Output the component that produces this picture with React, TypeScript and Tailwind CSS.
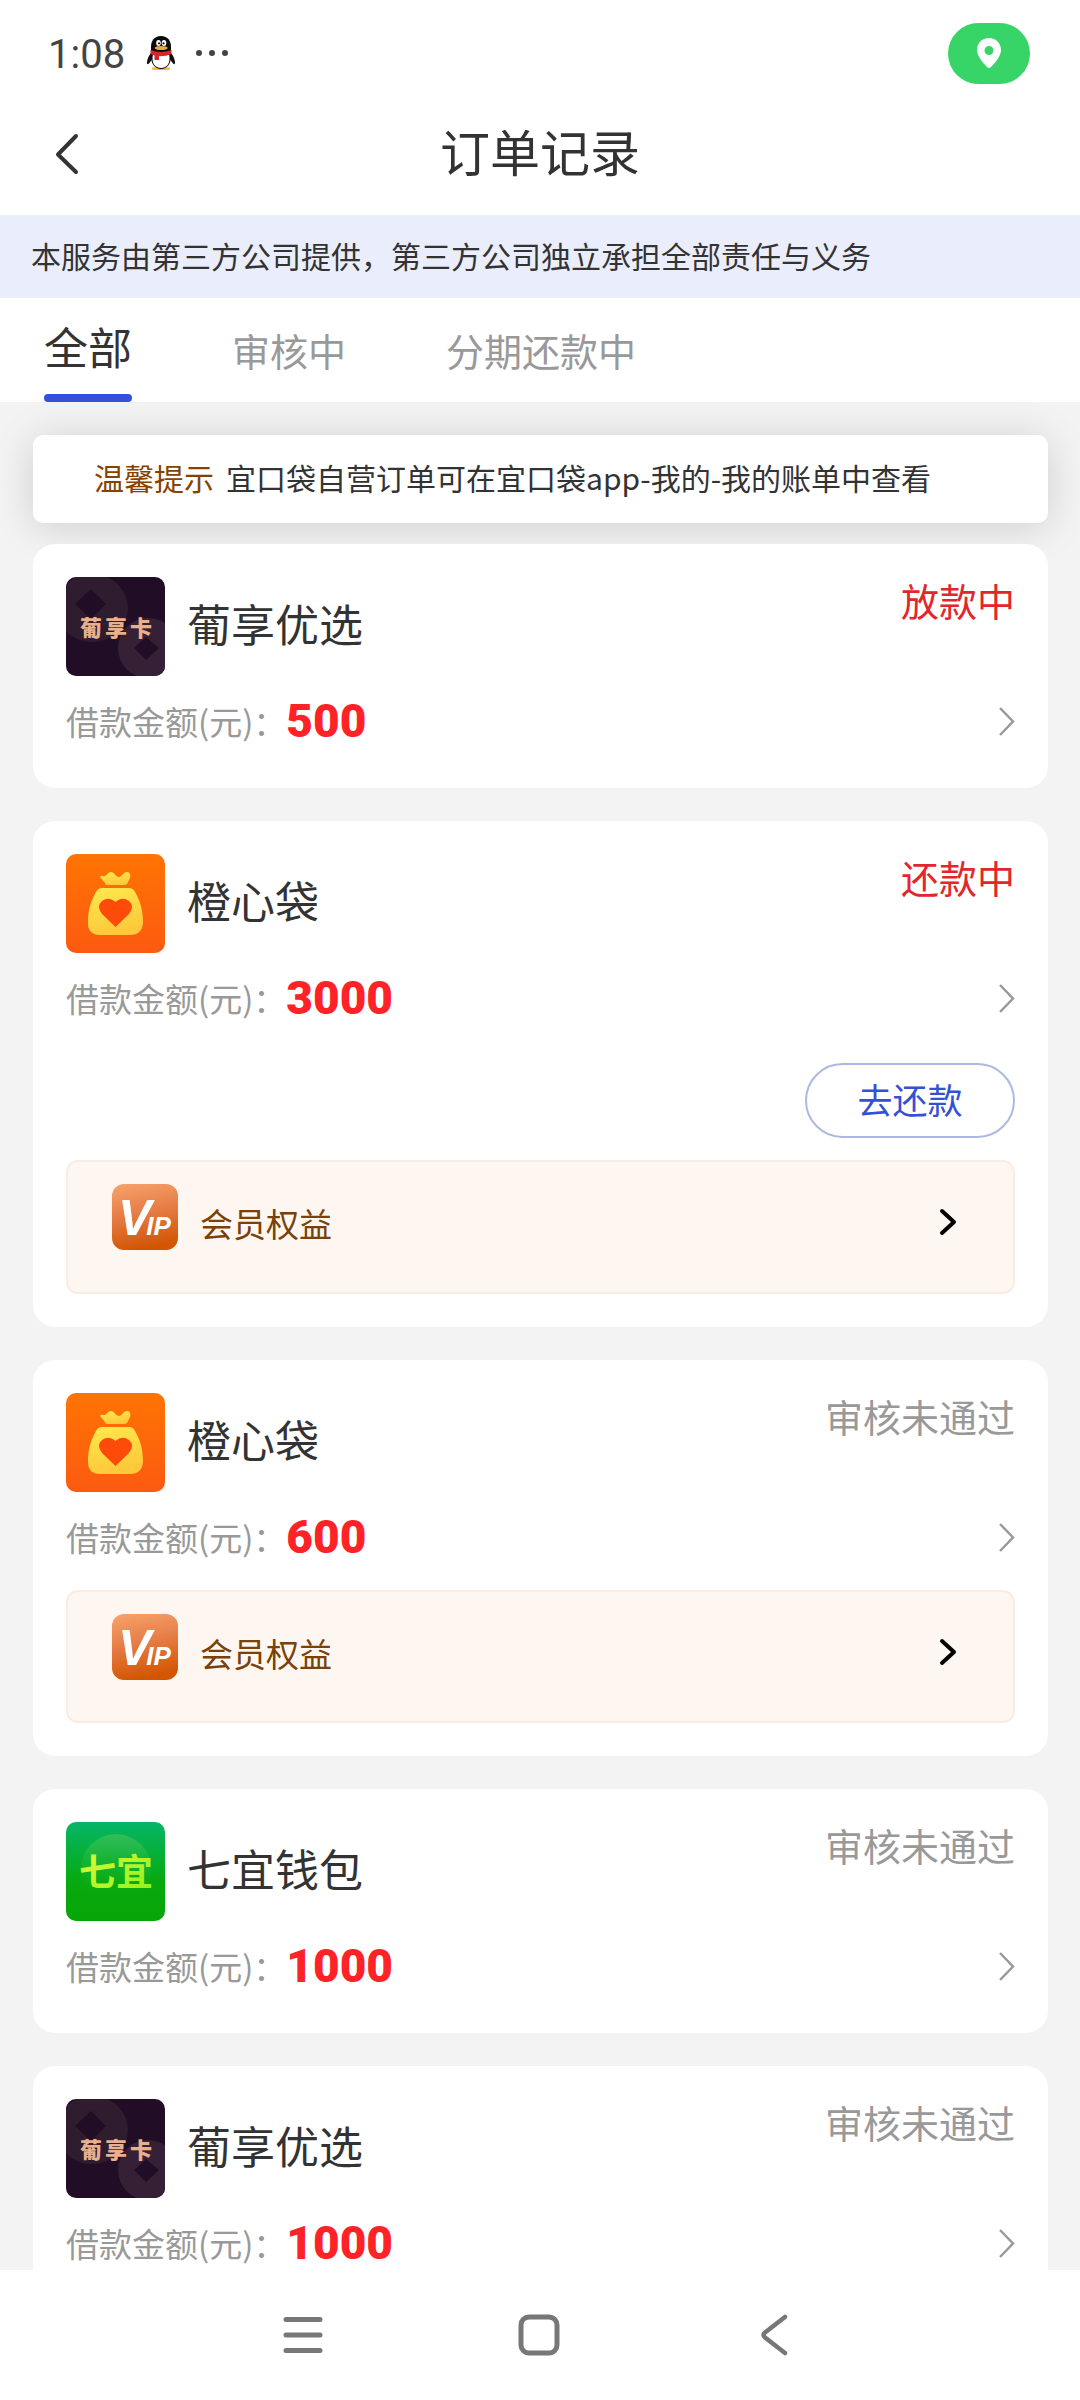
import React, { useState } from 'react'

type Brand = 'puxiang' | 'chengxin' | 'qiyi'

interface Order {
  id: number
  brand: Brand
  name: string
  amount: number
  status: string
  active?: boolean
  repay?: boolean
  vip?: boolean
}

const TABS = ['全部', '审核中', '分期还款中']

const ORDERS: Order[] = [
  { id: 1, brand: 'puxiang', name: '葡享优选', amount: 500, status: '放款中', active: true },
  { id: 2, brand: 'chengxin', name: '橙心袋', amount: 3000, status: '还款中', active: true, repay: true, vip: true },
  { id: 3, brand: 'chengxin', name: '橙心袋', amount: 600, status: '审核未通过', vip: true },
  { id: 4, brand: 'qiyi', name: '七宜钱包', amount: 1000, status: '审核未通过' },
  { id: 5, brand: 'puxiang', name: '葡享优选', amount: 1000, status: '审核未通过' },
]

const PenguinIcon = () => (
  <svg width="28" height="34" viewBox="0 0 28 34" aria-hidden="true">
    <path d="M5 31.500h18v1.500q0 1-2 1H7q-2 0-2-1z" fill="#f5b941" />
    <path d="M4 17Q0 22 0 27q0 2 2 .5l3-4zM24 17q4 5 4 10 0 2-2 .5l-3-4z" fill="#111" />
    <path d="M14 0C7 0 4 5 4 11v9c0 8 4 13 10 13s10-5 10-13v-9C24 5 21 0 14 0z" fill="#0b0b0b" />
    <path d="M6 18c-2 9 2 14 8 14s10-5 8-14z" fill="#fff" />
    <ellipse cx="11.500" cy="7" rx="2.300" ry="3" fill="#fff" />
    <ellipse cx="17" cy="7" rx="2.300" ry="3" fill="#fff" />
    <circle cx="12" cy="7.300" r="1.100" fill="#111" />
    <circle cx="16.600" cy="7.300" r="1.100" fill="#111" />
    <ellipse cx="14.200" cy="12" rx="6.500" ry="2" fill="#f2a93b" />
    <path d="M3.500 14q10.500 4 21 0v4q-6 2.500-12.500 2.200V24H7.500v-4.500l-4-1.500z" fill="#d8242c" />
  </svg>
)

const PuxiangLogo = () => (
  <svg viewBox="0 0 99 99" className="size-[99px] shrink-0 rounded-[10px]" role="img" aria-label="葡享卡">
    <rect width="99" height="99" fill="#210e26" />
    <path fillRule="evenodd" d="M26-3a36 34 0 1 1 0 68 36 34 0 0 1 0-68zM25 12L9 27l16 15 15-15z" fill="#301c2f" />
    <path fillRule="evenodd" d="M82 41a30 30 0 1 1 0 60 30 30 0 0 1 0-60zM80 60L68 71l12 12 13-12z" fill="#362036" />
    <g fontSize="22" fontWeight="900" fill="#e8b08c" textAnchor="middle">
      <text x="25" y="59">葡</text>
      <text x="50" y="59">享</text>
      <text x="75" y="59">卡</text>
    </g>
  </svg>
)

const ChengxinLogo = () => (
  <svg viewBox="0 0 99 99" className="size-[99px] shrink-0 rounded-[10px]" role="img" aria-label="橙心袋">
    <defs>
      <linearGradient id="orange" x1="0" y1="0" x2="0" y2="1">
        <stop offset="0" stopColor="#ff7403" />
        <stop offset="1" stopColor="#fc5a10" />
      </linearGradient>
      <linearGradient id="bag" x1="0" y1="0" x2="0.300" y2="1">
        <stop offset="0" stopColor="#ffe94d" />
        <stop offset="1" stopColor="#fdc93a" />
      </linearGradient>
    </defs>
    <rect width="99" height="99" fill="url(#orange)" />
    <path d="M34 23c1-2 3-1 5-1 2-1 3-4 6-4s5 5 8 5 4-5 8-5c3 0 4 3 3 6l-3 6q-1 1-3 1H41q-2 0-2-2z" fill="url(#bag)" />
    <path d="M36 34h27q4 0 6 4c5 9 8 17 8 31q-1 12-13 12H34q-12 0-12-12c0-14 3-22 8-31q2-4 6-4z" fill="url(#bag)" />
    <path d="M49.500 73L36 60q-6-8 0-13 7-5 13.500 1Q56 42 63 47q6 5 0 13z" fill="#ff4b0a" />
  </svg>
)

const QiyiLogo = () => (
  <svg viewBox="0 0 99 99" className="size-[99px] shrink-0 rounded-[10px]" role="img" aria-label="七宜">
    <defs>
      <linearGradient id="green" x1="0" y1="0" x2="0" y2="1">
        <stop offset="0" stopColor="#05b668" />
        <stop offset="0.600" stopColor="#07aa0f" />
        <stop offset="1" stopColor="#08a507" />
      </linearGradient>
      <linearGradient id="disc" x1="0" y1="0" x2="0" y2="1">
        <stop offset="0" stopColor="#3fc05c" stopOpacity="0.800" />
        <stop offset="0.900" stopColor="#0fae14" stopOpacity="0" />
      </linearGradient>
      <linearGradient id="lime" x1="0" y1="0" x2="1" y2="1">
        <stop offset="0" stopColor="#e6fb3a" />
        <stop offset="1" stopColor="#8cf01c" />
      </linearGradient>
    </defs>
    <rect width="99" height="99" fill="url(#green)" />
    <circle cx="50" cy="47" r="35" fill="url(#disc)" />
    <text x="50" y="64" fontSize="37" fontWeight="700" textAnchor="middle" fill="url(#lime)">
      七宜
    </text>
  </svg>
)

const VipLogo = () => (
  <svg viewBox="0 0 66 66" className="size-[66px] rounded-xl" role="img" aria-label="VIP">
    <defs>
      <linearGradient id="vip" x1="0.200" y1="0" x2="0.400" y2="1">
        <stop offset="0" stopColor="#f6a06a" />
        <stop offset="0.500" stopColor="#e47a42" />
        <stop offset="1" stopColor="#d25500" />
      </linearGradient>
    </defs>
    <rect width="66" height="66" fill="url(#vip)" />
    <text
      x="6"
      y="51"
      fontSize="50"
      fontFamily="Liberation Sans, sans-serif"
      fontWeight="700"
      fontStyle="italic"
      fill="#fff"
    >
      V<tspan dx="-5" fontSize="26">IP</tspan>
    </text>
  </svg>
)

const LOGOS: Record<Brand, React.FC> = {
  puxiang: PuxiangLogo,
  chengxin: ChengxinLogo,
  qiyi: QiyiLogo,
}

const OrderCard: React.FC<{ order: Order }> = ({ order }) => {
  const Logo = LOGOS[order.brand]

  return (
    <article className="rounded-[22px] bg-white p-[33px]">
      <div className="flex items-start">
        <Logo />
        <h2 className="ml-[22px] flex-1 text-[44px] leading-[92px] text-[#333]">{order.name}</h2>
        <span className={order.active ? 'text-[38px] leading-[46px] text-[#e3262b]' : 'text-[38px] leading-[46px] text-[#999]'}>
          {order.status}
        </span>
      </div>

      <a href="#" className="mt-[11px] flex h-[68px] items-center">
        <span className="text-[33px] leading-[44px] text-[#999]">借款金额(元)：</span>
        <span className="font-[Roboto,sans-serif] text-[46px] leading-[46px] font-black text-[#ff2226]">
          {order.amount}
        </span>
        <svg className="ml-auto" width="17" height="30" viewBox="0 0 17 30" fill="none" aria-hidden="true">
          <path d="M2 2l13 13.500L2 29" stroke="#999" strokeWidth="2.500" />
        </svg>
      </a>

      {order.repay && (
        <div className="mt-[31px] flex justify-end">
          <button className="h-[75px] w-[210px] rounded-full border-2 border-[#adb8e2] pb-1 text-[35px] leading-none text-[#3450d4]">
            去还款
          </button>
        </div>
      )}

      {order.vip && (
        <a
          href="#"
          className={
            order.repay
              ? 'mt-[22px] flex h-[134px] items-start rounded-xl border-2 border-[#f9ede3] bg-[#fef7f1] pt-[22px] pr-[56px] pl-[44px]'
              : 'mt-[19px] flex h-[133px] items-start rounded-xl border-2 border-[#f9ede3] bg-[#fef7f1] pt-[22px] pr-[56px] pl-[44px]'
          }
        >
          <VipLogo />
          <span className="ml-[22px] text-[33px] leading-[78px] text-[#7a4108]">会员权益</span>
          <svg className="mt-6 ml-auto" width="18" height="28" viewBox="0 0 18 28" fill="none" aria-hidden="true">
            <path d="M3 3l12 11L3 25" stroke="#000" strokeWidth="4" strokeLinecap="round" strokeLinejoin="round" />
          </svg>
        </a>
      )}
    </article>
  )
}

const App: React.FC = () => {
  const [tab, setTab] = useState(0)

  return (
    <div className="flex h-screen flex-col bg-[#f3f3f3] font-['Noto_Sans_CJK_SC',sans-serif]">
      {/* Phone status bar */}
      <div className="flex h-[92px] shrink-0 items-center bg-white pt-[14px] pr-[50px] pl-12">
        <span className="pt-1 font-[Roboto,sans-serif] text-[40px] leading-[46px] text-[#444]">1:08</span>
        <span className="ml-[22px]">
          <PenguinIcon />
        </span>
        <svg className="ml-5" width="34" height="8" viewBox="0 0 34 8" fill="#444" aria-hidden="true">
          <circle cx="4" cy="4" r="3" />
          <circle cx="17" cy="4" r="3" />
          <circle cx="30" cy="4" r="3" />
        </svg>
        <span className="ml-auto flex h-[61px] w-[82px] items-center justify-center rounded-full bg-[#37d468]">
          <svg width="24" height="32" viewBox="0 0 24 32" aria-hidden="true">
            <path fillRule="evenodd" d="M12 1c7 0 12 5 12 12 0 6-6 13-10 17q-2 2-4 0C6 26 0 19 0 13 0 6 5 1 12 1zm0 8a4 4 0 1 0 0 9 4 4 0 0 0 0-9z" fill="#fff" />
          </svg>
        </span>
      </div>

      <header className="grid h-[123px] shrink-0 grid-cols-[100px_1fr_100px] items-center bg-white">
        <button aria-label="返回" className="pl-[55px]">
          <svg width="24" height="42" viewBox="0 0 24 42" fill="none">
            <path d="M21 3L3 21.500 21 39" stroke="#333" strokeWidth="4" strokeLinecap="round" strokeLinejoin="round" />
          </svg>
        </button>
        <h1 className="pb-2 text-center text-[50px] leading-[64px] text-[#333]">订单记录</h1>
      </header>

      <p className="shrink-0 bg-[#eaedfc] px-[31px] pb-0.5 text-[30px] leading-[81px] text-[#333]">
        本服务由第三方公司提供，第三方公司独立承担全部责任与义务
      </p>

      <nav className="flex h-[104px] shrink-0 gap-[100px] bg-white px-11">
        {TABS.map((label, i) => (
          <button
            key={label}
            onClick={() => setTab(i)}
            className={
              i === tab
                ? 'flex flex-col justify-between text-[44px] leading-[96px] text-[#333]'
                : 'flex flex-col justify-between text-[38px] leading-[104px] text-[#999]'
            }
          >
            {label}
            {i === tab && <span className="h-2 w-full rounded-full bg-[#3450de]" />}
          </button>
        ))}
      </nav>

      <main className="flex-1 overflow-y-auto pt-[33px] pr-8 pl-[33px] [scrollbar-width:none]">
        <p className="flex h-[88px] items-center gap-3 rounded-[10px] bg-white px-[61px] pb-1 text-[30px] leading-[44px] whitespace-nowrap text-[#333] shadow-[0_4px_40px_rgba(0,0,0,0.15)]">
          <span className="text-[#854200]">温馨提示</span>
          宜口袋自营订单可在宜口袋app-我的-我的账单中查看
        </p>
        <div className="relative mt-[21px] flex flex-col gap-[33px] pb-[33px]">
          {ORDERS.map(order => (
            <OrderCard key={order.id} order={order} />
          ))}
        </div>
      </main>

      {/* System navigation */}
      <footer className="flex h-[130px] shrink-0 items-center justify-center gap-[192px] bg-white pr-0.5">
        <button aria-label="最近任务">
          <svg width="44" height="44" viewBox="0 0 44 44" fill="none" stroke="#777" strokeWidth="5" strokeLinecap="round">
            <path d="M5 6.500h34M5 22h34M5 37.500h34" />
          </svg>
        </button>
        <button aria-label="主屏幕">
          <svg width="44" height="44" viewBox="0 0 44 44" fill="none" stroke="#777" strokeWidth="5">
            <rect x="4" y="4" width="36" height="36" rx="8" />
          </svg>
        </button>
        <button aria-label="后退">
          <svg width="44" height="44" viewBox="0 0 44 44" fill="none" stroke="#777" strokeWidth="4.500" strokeLinecap="round" strokeLinejoin="round">
            <path d="M32 4L12 19.500q-3 2.500 0 5L32 40" />
          </svg>
        </button>
      </footer>
    </div>
  )
}

export default App
